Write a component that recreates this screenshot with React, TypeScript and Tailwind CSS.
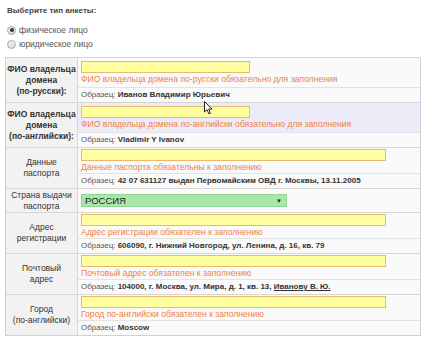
import React from 'react'

type Row = {
  label: string[]
  bold?: boolean
  input?: 'short' | 'long'
  error?: string
  sample?: React.ReactNode
  select?: string
  hover?: boolean
}

const rows: Row[] = [
  {
    label: ['ФИО владельца', 'домена', '(по-русски):'],
    bold: true,
    input: 'short',
    error: 'ФИО владельца домена по-русски обязательно для заполнения',
    sample: <b>Иванов Владимир Юрьевич</b>,
  },
  {
    label: ['ФИО владельца', 'домена', '(по-английски):'],
    bold: true,
    input: 'short',
    hover: true,
    error: 'ФИО владельца домена по-английски обязательно для заполнения',
    sample: <b>Vladimir Y Ivanov</b>,
  },
  {
    label: ['Данные', 'паспорта'],
    input: 'long',
    error: 'Данные паспорта обязательны к заполнению',
    sample: <b>42 07 631127 выдан Первомайским ОВД г. Москвы, 13.11.2005</b>,
  },
  {
    label: ['Страна выдачи', 'паспорта'],
    select: 'РОССИЯ',
  },
  {
    label: ['Адрес', 'регистрации'],
    input: 'long',
    error: 'Адрес регистрации обязателен к заполнению',
    sample: <b>606090, г. Нижний Новгород, ул. Ленина, д. 16, кв. 79</b>,
  },
  {
    label: ['Почтовый', 'адрес'],
    input: 'long',
    error: 'Почтовый адрес обязателен к заполнению',
    sample: (
      <b>
        104000, г. Москва, ул. Мира, д. 1, кв. 13, <span className="underline">Иванову В. Ю.</span>
      </b>
    ),
  },
  {
    label: ['Город', '(по-английски)'],
    input: 'long',
    error: 'Город по-английски обязателен к заполнению',
    sample: <b>Moscow</b>,
  },
]

function Radio({ checked, label }: { checked?: boolean; label: string }) {
  return (
    <label className="flex items-center gap-[3px] h-[14px]">
      <span className="w-[9px] h-[9px] rounded-full border border-[#a5a5a5] bg-gradient-to-b from-[#f4f4f4] to-[#d9d9d9] flex items-center justify-center">
        {checked && <span className="w-[4px] h-[4px] rounded-full bg-[#333]" />}
      </span>
      <span className="text-[8.5px] text-[#555]">{label}</span>
    </label>
  )
}

function FieldRow({ row }: { row: Row }) {
  return (
    <div className="flex border-t border-[#d6d6d6]">
      {/* Label */}
      <div
        className={`w-[72px] shrink-0 bg-[#f2f2f2] border-r border-[#d6d6d6] flex flex-col items-center justify-center text-[8.5px] leading-[11px] text-[#333] text-center ${
          row.bold ? 'font-bold py-[5.5px]' : ''
        }`}
      >
        {row.label.map(l => (
          <span key={l} className="whitespace-nowrap">{l}</span>
        ))}
      </div>

      {/* Value */}
      {row.select ? (
        <div className="flex-1 h-[23px] bg-[#fafafa] flex items-center pl-[3px]">
          <div className="w-[206px] h-[13px] bg-[#a9e6aa] border border-[#93d494] flex items-center justify-between pl-[3px] pr-[4px]">
            <span className="text-[9.5px] text-[#222] leading-none">{row.select}</span>
            <span className="text-[6px] text-[#222] leading-none">▼</span>
          </div>
        </div>
      ) : (
        <div className="flex-1 flex flex-col bg-[#fafafa]">
          <div
            className={`flex-1 flex flex-col justify-center pl-[3px] pt-[1px] ${row.hover ? 'bg-[#ececf8]' : ''}`}
          >
            <div
              className={`h-[12px] bg-[#ffff9f] border border-[#e6bb6a] ${
                row.input === 'short' ? 'w-[169px]' : 'w-[305px]'
              }`}
            />
            <div className="text-[8.6px] leading-[12px] text-[#f07f48] whitespace-nowrap">{row.error}</div>
          </div>
          <div className="h-[15px] border-t border-[#e4e4e4] pl-[3px] flex items-center text-[8px] text-[#333] bg-[#fafafa] whitespace-nowrap">
            <span className="text-[#555]">Образец:&nbsp;</span>
            {row.sample}
          </div>
        </div>
      )}
    </div>
  )
}

export default function App() {
  return (
    <div className="relative w-[424px] h-[344px] overflow-hidden bg-white font-['Liberation_Sans',Arial,sans-serif]">
      <div className="pl-[7px] pt-[4px]">
        <div className="text-[8px] font-bold text-[#444] h-[13px] leading-[13px]">Выберите тип анкеты:</div>
        <div className="mt-[6px] flex flex-col">
          <Radio checked label="физическое лицо" />
          <Radio label="юридическое лицо" />
        </div>
      </div>

      {/* Form table */}
      <div className="ml-[5px] mt-[6px] w-[416px] border-l border-r border-[#cfd2da] border-b">
        {rows.map(r => (
          <FieldRow key={r.label.join(' ')} row={r} />
        ))}
      </div>

      {/* Mouse cursor */}
      <svg className="absolute left-[204px] top-[101px]" width="9" height="14" viewBox="0 0 9 14">
        <path d="M0.5 0.5 L0.5 11 L3 8.6 L4.8 12.8 L6.4 12.1 L4.7 8.1 L8 8.1 Z" fill="#fff" stroke="#222" strokeWidth="1" />
      </svg>
    </div>
  )
}
